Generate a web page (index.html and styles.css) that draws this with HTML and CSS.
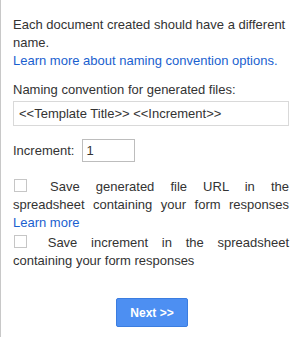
FILE: index.html
```html
<!DOCTYPE html>
<html lang="en">
<head>
    <meta charset="UTF-8">
    <title>Naming</title>
    <link rel="stylesheet" href="styles.css">
</head>
<body>
<div class="panel">
    <p class="intro">Each document created should have a different name.<br>
        <a href="#">Learn more about naming convention options.</a></p>

    <div class="label">Naming convention for generated files:</div>
    <input class="namefield" type="text" value="<<Template Title>> <<Increment>>">

    <div class="incrow">
        <span>Increment:</span>
        <input class="incfield" type="text" value="1">
    </div>

    <div class="opt">
        <span class="box"></span> Save generated file URL in the spreadsheet containing your form responses
        <a href="#">Learn more</a>
    </div>
    <div class="opt second">
        <span class="box"></span> Save increment in the spreadsheet containing your form responses
    </div>

    <div class="actions">
        <button class="nextbtn">Next &gt;&gt;</button>
    </div>
</div>
</body>
</html>
```

FILE: styles.css
```css
body {
    margin: 0;
    font-family: "Liberation Sans", Arial, sans-serif;
    font-size: 13px;
    color: #333;
    background: #fff;
}

.panel {
    border-left: 1px solid #c8c8c8;
    height: 337px;
    box-sizing: border-box;
    padding: 16px 12px 0 12px;
    line-height: 18px;
}

a {
    color: #1a5fcf;
    text-decoration: none;
}

.intro {
    margin: 0 0 11px 0;
}

.label {
    margin-bottom: 2px;
}

.namefield {
    display: block;
    width: 100%;
    box-sizing: border-box;
    height: 25px;
    border: 1px solid #d9d9d9;
    padding: 0 5px;
    font: inherit;
    color: #333;
    margin-bottom: 13px;
}

.incrow {
    display: flex;
    align-items: center;
    gap: 8px;
    margin-bottom: 16px;
}

.incfield {
    width: 53px;
    height: 23px;
    box-sizing: border-box;
    border: 1px solid #bdbdbd;
    padding: 0 3px;
    font: inherit;
    color: #333;
}

.opt {
    text-align: justify;
}

.second {
    margin-top: 2px;
}

.box {
    display: inline-block;
    width: 11px;
    height: 11px;
    border: 1px solid #c6c6c6;
    vertical-align: -1px;
    margin-left: 1px;
    margin-right: 7px;
}

.actions {
    display: flex;
    justify-content: center;
    margin-top: 28px;
}

.nextbtn {
    width: 72px;
    height: 29px;
    background: #4d8ff2;
    border: 1px solid #3b7de0;
    border-radius: 2px;
    color: #fff;
    font-family: inherit;
    font-size: 12px;
    font-weight: bold;
    margin-left: 2px;
}
```
